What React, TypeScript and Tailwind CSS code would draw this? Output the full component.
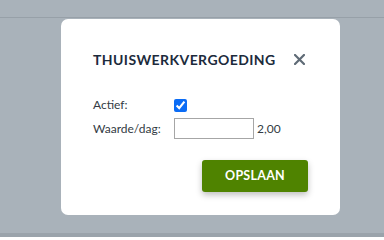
import React, { useState } from 'react';

const App = () => {
  const [active, setActive] = useState(true);
  const [value, setValue] = useState('');

  return (
    <div className="relative h-[237px] w-full overflow-hidden bg-[#a9b2ba] font-['Lato',sans-serif]">
      {/* page behind the overlay */}
      <div className="h-[18px] border-b border-[#97a0a8]" />
      <div className="absolute bottom-0 left-0 right-0 h-[4px] bg-[#9aa3ab]" />

      {/* Dialog */}
      <div className="ml-[61px] mt-[1px] h-[196px] w-[279px] rounded-[7px] bg-white pl-[32px] pr-[35px] pt-[30px]">
        <div className="flex items-center justify-between">
          <h2 className="text-[14px] font-bold tracking-[0.03em] text-[#1c2b3c]">THUISWERKVERGOEDING</h2>
          <button className="flex h-[12px] w-[12px] items-center justify-center text-[#5f6b76]">
            <svg width="11" height="11" viewBox="0 0 11 11" fill="none">
              <path d="M1 1L10 10M10 1L1 10" stroke="currentColor" strokeWidth="2.2" strokeLinecap="square" />
            </svg>
          </button>
        </div>

        <div className="mt-[27px] grid grid-cols-[81px_auto] items-center gap-y-[5px] text-[12px] text-[#333b44]">
          <label className="leading-[16px]">Actief:</label>
          <input
            type="checkbox"
            checked={active}
            onChange={(e) => setActive(e.target.checked)}
            className="h-[13px] w-[13px] accent-[#0b6cf5]"
          />
          <label className="leading-[21px]">Waarde/dag:</label>
          <div className="flex items-center gap-[3px]">
            <input
              value={value}
              onChange={(e) => setValue(e.target.value)}
              className="h-[21px] w-[80px] border border-[#a6a6a6] px-1 text-[12px] outline-none"
            />
            <span>2,00</span>
          </div>
        </div>

        <div className="mt-[21px] -mr-[3px] flex justify-end">
          <button className="h-[32px] w-[106px] rounded-[3px] bg-[#4f8300] text-[12.5px] font-bold tracking-[0.02em] text-white shadow-[0_3px_6px_rgba(0,0,0,0.25)]">
            OPSLAAN
          </button>
        </div>
      </div>
    </div>
  );
};

export default App;
